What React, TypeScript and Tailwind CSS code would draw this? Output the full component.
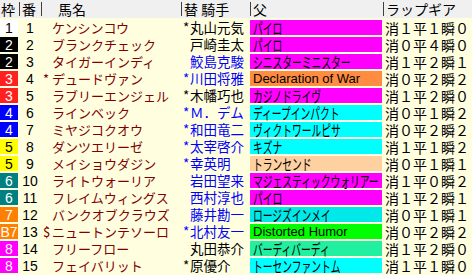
type Row = {
  waku: string;
  wakuBg: string;
  wakuText: string;
  num: number;
  mark: string;
  name: string;
  jMark: string;
  jockey: string;
  jBlue: boolean;
  sire: string;
  sireBg: string;
  ascii?: boolean;
  lap: string;
};

const rows: Row[] = [
  { waku: "1", wakuBg: "bg-white", wakuText: "text-black", num: 1, mark: "", name: "ケンシンコウ", jMark: "*", jockey: "丸山元気", jBlue: false, sire: "パイロ", sireBg: "bg-[#ff00ff]", lap: "消１平１瞬０" },
  { waku: "2", wakuBg: "bg-black", wakuText: "text-white", num: 2, mark: "", name: "ブランクチェック", jMark: "", jockey: "戸崎圭太", jBlue: false, sire: "パイロ", sireBg: "bg-[#ff00ff]", lap: "消０平４瞬０" },
  { waku: "2", wakuBg: "bg-black", wakuText: "text-white", num: 3, mark: "", name: "タイガーインディ", jMark: "", jockey: "鮫島克駿", jBlue: true, sire: "シニスターミニスター", sireBg: "bg-[#ff00ff]", lap: "消１平２瞬１" },
  { waku: "3", wakuBg: "bg-[#ff2020]", wakuText: "text-white", num: 4, mark: "*", name: "デュードヴァン", jMark: "*", jockey: "川田将雅", jBlue: true, sire: "Declaration of War", sireBg: "bg-[#ff8c40]", ascii: true, lap: "消０平２瞬２" },
  { waku: "3", wakuBg: "bg-[#ff2020]", wakuText: "text-white", num: 5, mark: "", name: "ラブリーエンジェル", jMark: "*", jockey: "木幡巧也", jBlue: false, sire: "カジノドライヴ", sireBg: "bg-[#ff00ff]", lap: "消１平２瞬０" },
  { waku: "4", wakuBg: "bg-[#0000ff]", wakuText: "text-white", num: 6, mark: "", name: "ラインベック", jMark: "*", jockey: "Ｍ．デム", jBlue: true, sire: "ディープインパクト", sireBg: "bg-[#00ffff]", lap: "消０平１瞬２" },
  { waku: "4", wakuBg: "bg-[#0000ff]", wakuText: "text-white", num: 7, mark: "", name: "ミヤジコクオウ", jMark: "*", jockey: "和田竜二", jBlue: true, sire: "ヴィクトワールピサ", sireBg: "bg-[#00ffff]", lap: "消０平２瞬２" },
  { waku: "5", wakuBg: "bg-[#ffff00]", wakuText: "text-black", num: 8, mark: "", name: "ダンツエリーゼ", jMark: "*", jockey: "太宰啓介", jBlue: true, sire: "キズナ", sireBg: "bg-[#00ffff]", lap: "消１平１瞬２" },
  { waku: "5", wakuBg: "bg-[#ffff00]", wakuText: "text-black", num: 9, mark: "", name: "メイショウダジン", jMark: "*", jockey: "幸英明", jBlue: true, sire: "トランセンド", sireBg: "bg-[#ffd0a0]", lap: "消０平１瞬１" },
  { waku: "6", wakuBg: "bg-[#008080]", wakuText: "text-white", num: 10, mark: "", name: "ライトウォーリア", jMark: "", jockey: "岩田望来", jBlue: true, sire: "マジェスティックウォリアー", sireBg: "bg-[#ff00ff]", lap: "消１平０瞬２" },
  { waku: "6", wakuBg: "bg-[#008080]", wakuText: "text-white", num: 11, mark: "", name: "フレイムウィングス", jMark: "", jockey: "西村淳也", jBlue: true, sire: "パイロ", sireBg: "bg-[#ff00ff]", lap: "消１平２瞬１" },
  { waku: "7", wakuBg: "bg-[#ff8000]", wakuText: "text-white", num: 12, mark: "", name: "バンクオブクラウズ", jMark: "", jockey: "藤井勘一", jBlue: true, sire: "ロージズインメイ", sireBg: "bg-[#00e8e8]", lap: "消０平１瞬１" },
  { waku: "B7", wakuBg: "bg-[#ff8000]", wakuText: "text-white", num: 13, mark: "$", name: "ニュートンテソーロ", jMark: "*", jockey: "北村友一", jBlue: true, sire: "Distorted Humor", sireBg: "bg-[#00ff00]", ascii: true, lap: "消０平２瞬２" },
  { waku: "8", wakuBg: "bg-[#ff00ff]", wakuText: "text-white", num: 14, mark: "", name: "フリーフロー", jMark: "", jockey: "丸田恭介", jBlue: false, sire: "バーディバーディ", sireBg: "bg-[#20f0a0]", lap: "消１平２瞬０" },
  { waku: "8", wakuBg: "bg-[#ff00ff]", wakuText: "text-white", num: 15, mark: "", name: "フェイバリット", jMark: "*", jockey: "原優介", jBlue: false, sire: "トーセンファントム", sireBg: "bg-[#00ffff]", lap: "消１平１瞬０" },
];

const jp = "font-['Noto_Sans_CJK_JP',sans-serif]";

export default function App() {
  return (
    <div className={`w-[472px] h-[275px] bg-[#ffffe0] overflow-hidden text-black ${jp} leading-none`}>
      {/* header */}
      <div className="flex h-[18px] bg-[#f0f0f0] items-center text-[14px]">
        <div className="w-[19px] pl-[1px]">枠</div>
        <div className="w-[22px] pl-[2px] h-[14px] border-l border-[#404040] flex items-center">番</div>
        <div className="w-[140px] pl-[16px] h-[14px] border-l border-[#404040] flex items-center">馬名</div>
        <div className="w-[69px] pl-[2px] h-[14px] border-l border-[#404040] flex items-center">替 騎手</div>
        <div className="w-[133px] pl-[2px] h-[14px] border-l border-[#404040] flex items-center">父</div>
        <div className="flex-1 pl-[2px] h-[14px] border-l border-[#404040] flex items-center">ラップギア</div>
      </div>
      <div className="h-[1px]" />
      {rows.map((r) => (
        <div key={r.num} className="flex h-[17px] items-stretch">
          <div className="w-[19px] py-[1px]">
            <div className={`w-[18px] h-full ${r.wakuBg} ${r.wakuText} flex items-center justify-center text-[14px] font-['Liberation_Sans',sans-serif]`}>
              {r.waku}
            </div>
          </div>
          <div className="w-[22px] flex items-center justify-center text-[14px] font-['Liberation_Sans',sans-serif]">
            {r.num}
          </div>
          <div className="w-[140px] flex items-center text-[#800000] text-[13px] whitespace-nowrap">
            <span className="w-[11px] pl-[2px] shrink-0">{r.mark}</span>
            <span>{r.name}</span>
          </div>
          <div className={`w-[69px] flex items-center text-[13.5px] whitespace-nowrap ${r.jBlue ? "text-[#0000ff]" : "text-black"}`}>
            <span className="w-[9px] pl-[2px] shrink-0">{r.jMark}</span>
            <span>{r.jockey}</span>
          </div>
          <div className="w-[133px] py-[1px]">
            <div className={`w-[132px] h-full ${r.sireBg} flex items-center whitespace-nowrap pl-[3px]`}>
              {r.ascii ? (
                <span className="text-[13px] font-['Liberation_Sans',sans-serif]">{r.sire}</span>
              ) : (
                <span className="inline-block text-[15px] origin-left scale-x-[0.65]">{r.sire}</span>
              )}
            </div>
          </div>
          <div className="flex-1 flex items-center pl-[2px] text-[14px] whitespace-nowrap">{r.lap}</div>
        </div>
      ))}
    </div>
  );
}
